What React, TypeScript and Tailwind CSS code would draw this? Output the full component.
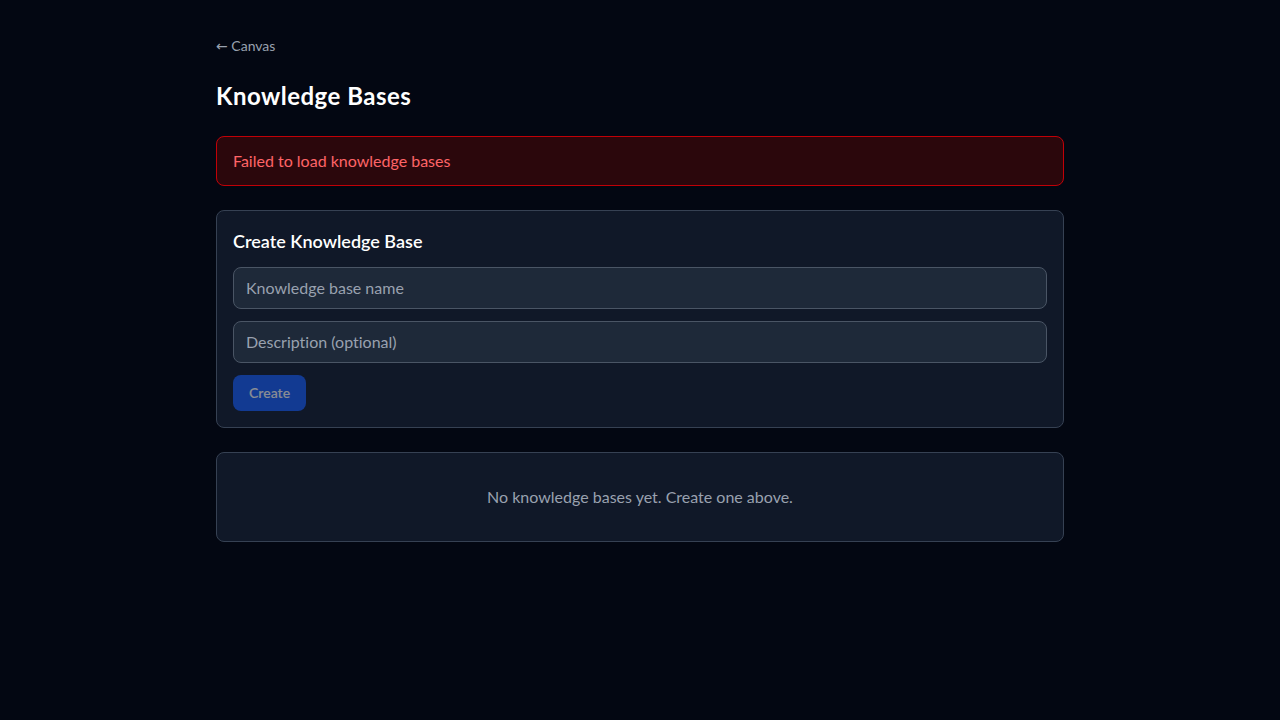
import { useState } from "react";

export default function App() {
  const [name, setName] = useState("");
  const [description, setDescription] = useState("");

  return (
    <div
      className="min-h-screen bg-[#030712] text-gray-100 [font-variant-ligatures:none]"
      style={{ fontFamily: 'Lato, "Open Sans", sans-serif' }}
    >
      <div className="mx-auto max-w-4xl px-6 pt-9 pb-8">
        <a href="#" className="block text-sm text-gray-400 hover:text-gray-200">
          <span style={{ fontFamily: '"DejaVu Sans", sans-serif' }}>←</span> Canvas
        </a>

        <h1 className="mt-6 text-2xl font-bold tracking-[0.02em] text-white">Knowledge Bases</h1>

        {/* Error */}
        <div className="mt-6 rounded-lg border border-red-700 bg-red-950/60 px-4 py-3 text-red-400">
          Failed to load knowledge bases
        </div>

        {/* Create form */}
        <div className="mt-6 rounded-lg border border-gray-700 bg-gray-900 p-4">
          <h2 className="mb-3 text-lg font-semibold text-white">Create Knowledge Base</h2>
          <div className="flex flex-col gap-3">
            <input
              value={name}
              onChange={(e) => setName(e.target.value)}
              placeholder="Knowledge base name"
              className="w-full rounded-lg border border-gray-600 bg-gray-800 px-3 py-2 text-base text-gray-100 placeholder-gray-400 outline-none [font-variant-ligatures:none] focus:border-blue-500"
            />
            <input
              value={description}
              onChange={(e) => setDescription(e.target.value)}
              placeholder="Description (optional)"
              className="w-full rounded-lg border border-gray-600 bg-gray-800 px-3 py-2 text-base text-gray-100 placeholder-gray-400 outline-none [font-variant-ligatures:none] focus:border-blue-500"
            />
            <div>
              <button
                disabled={!name.trim()}
                className="rounded-lg bg-blue-600 px-4 py-2 text-sm font-semibold text-white hover:bg-blue-700 disabled:opacity-50"
              >
                Create
              </button>
            </div>
          </div>
        </div>

        {/* Empty state */}
        <div className="mt-6 rounded-lg border border-gray-700 bg-gray-900 p-8 text-center text-gray-400">
          No knowledge bases yet. Create one above.
        </div>
      </div>
    </div>
  );
}
